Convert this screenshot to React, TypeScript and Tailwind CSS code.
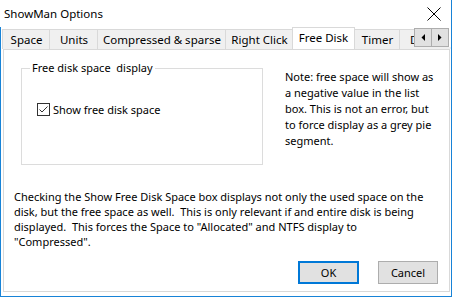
import React from 'react';

const tabs = [
  { label: 'Space', w: 'w-[48px]' },
  { label: 'Units', w: 'w-[49px]' },
  { label: 'Compressed & sparse', w: 'w-[129px]' },
  { label: 'Right Click', w: 'w-[68px]' },
  { label: 'Free Disk', w: 'w-[63px]', active: true },
  { label: 'Timer', w: 'w-[46px]' },
  { label: 'Display', w: 'w-[60px]' },
];

const ArrowButton = ({ dir }: { dir: 'left' | 'right' }) => (
  <div className="flex h-[19px] w-[18px] items-center justify-center border border-[#adadad] bg-[#e1e1e1] -ml-px first:ml-0">
    <svg width="4" height="7" viewBox="0 0 4 7">
      {dir === 'left' ? (
        <polygon points="4,0 4,7 0.5,3.5" fill="#000" />
      ) : (
        <polygon points="0,0 0,7 3.5,3.5" fill="#000" />
      )}
    </svg>
  </div>
);

const App: React.FC = () => {
  return (
    <div className="flex h-[297px] w-[452px] flex-col overflow-hidden border-r border-b border-[#1883d7] bg-white text-[11px] leading-[15px] text-black [font-family:'Noto_Sans',sans-serif]">
      {/* title bar */}
      <div className="flex h-[27px] shrink-0 items-center justify-between pl-[4px] pr-[10px]">
        <span className="text-[11.5px]">ShowMan Options</span>
        <svg width="14" height="14" viewBox="0 0 14 14">
          <path d="M0.5 0.5L13.5 13.5M13.5 0.5L0.5 13.5" stroke="#000" strokeWidth="1" />
        </svg>
      </div>

      <div className="flex flex-1 flex-col border-l border-[#1883d7]">
        {/* tabs */}
        <div className="relative flex h-[22px] shrink-0 items-end overflow-hidden pl-[2px]">
          {tabs.map((t) => (
            <div
              key={t.label}
              className={
                t.active
                  ? `relative z-10 -mb-px -ml-px flex h-[23px] ${t.w} shrink-0 items-start justify-center border border-b-0 border-[#d9d9d9] bg-white pt-[2px]`
                  : `-ml-px flex h-[20px] ${t.w} shrink-0 items-center justify-center border border-b-0 border-[#d9d9d9] bg-[#f0f0f0] pl-px`
              }
            >
              <span className="whitespace-nowrap text-[11.5px]">{t.label}</span>
            </div>
          ))}
          <div className="absolute top-[1px] left-[413px] flex bg-white pr-[2px]">
            <ArrowButton dir="left" />
            <ArrowButton dir="right" />
          </div>
        </div>

        {/* page */}
        <div className="mb-[5px] ml-[2px] mr-[1px] flex h-[243px] flex-col border border-[#d9d9d9] bg-white">
          <div className="mt-[18px] flex">
            <div className="relative ml-[17px] h-[97px] w-[242px] shrink-0 border border-[#dcdcdc]">
              <span className="absolute -top-[9px] left-[8px] whitespace-pre bg-white px-[2px]">
                Free disk space  display
              </span>
              <label className="mt-[33px] ml-[15px] flex items-center gap-[3px]">
                <span className="flex h-[13px] w-[13px] items-center justify-center border border-[#333] bg-white">
                  <svg width="11" height="11" viewBox="0 0 11 11">
                    <path d="M1.5 5.5L4 8L9.5 2.5" stroke="#333" strokeWidth="1" fill="none" />
                  </svg>
                </span>
                <span>Show free disk space</span>
              </label>
            </div>
            <p className="ml-[22px] mt-[1px] whitespace-nowrap leading-[16px]">
              Note: free space will show as
              <br />a negative value in the list
              <br />box. This is not an error, but
              <br />to force display as a grey pie
              <br />segment.
            </p>
          </div>

          <p className="ml-[10px] mt-[24px] whitespace-pre">
            Checking the Show Free Disk Space box displays not only the used space on the
            <br />disk, but the free space as well.  This is only relevant if and entire disk is being
            <br />displayed.  This forces the Space to "Allocated" and NTFS display to
            <br />"Compressed".
          </p>

          <div className="mt-auto mb-[7px] mr-[11px] flex justify-end gap-[19px]">
            <button className="h-[23px] w-[61px] border-2 border-[#0078d7] bg-[#e1e1e1]">OK</button>
            <button className="h-[23px] w-[60px] border border-[#adadad] bg-[#e1e1e1]">Cancel</button>
          </div>
        </div>
      </div>
    </div>
  );
};

export default App;
